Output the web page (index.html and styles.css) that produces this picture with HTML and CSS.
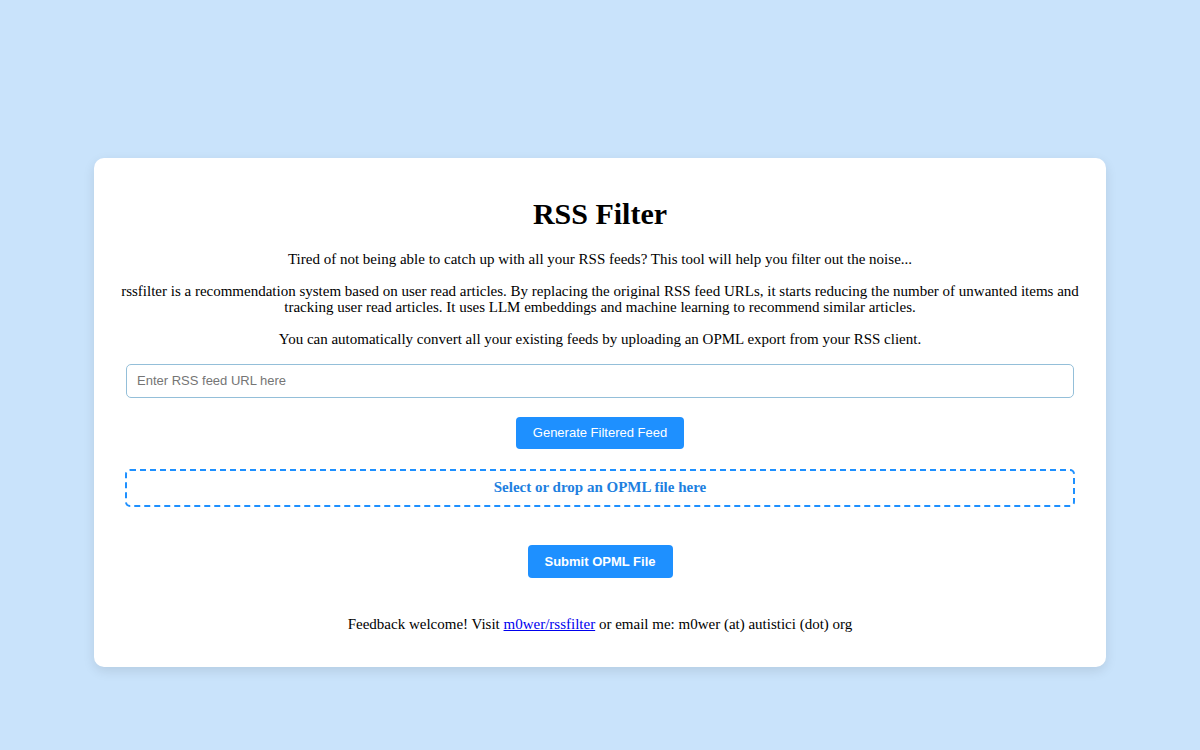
FILE: index.html
```html
<!DOCTYPE html>
<html lang="en">
<head>
<meta charset="utf-8">
<title>RSS Filter</title>
<link rel="stylesheet" href="styles.css">
</head>
<body>
<main class="card">
  <h1 class="title">RSS Filter</h1>
  <p class="text">Tired of not being able to catch up with all your RSS feeds? This tool will help you filter out the noise...</p>
  <p class="text">rssfilter is a recommendation system based on user read articles. By replacing the original RSS feed URLs, it starts reducing the number of unwanted items and tracking user read articles. It uses LLM embeddings and machine learning to recommend similar articles.</p>
  <p class="text text-last">You can automatically convert all your existing feeds by uploading an OPML export from your RSS client.</p>
  <input class="url-input" type="text" placeholder="Enter RSS feed URL here">
  <div class="btn-row"><button class="btn">Generate Filtered Feed</button></div>
  <label class="drop">Select or drop an OPML file here</label>
  <div class="btn-row submit-row"><button class="btn btn-bold">Submit OPML File</button></div>
  <p class="text footer">Feedback welcome! Visit <a href="#">m0wer/rssfilter</a> or email me: m0wer (at) autistici (dot) org</p>
</main>
</body>
</html>
```
FILE: styles.css
```css
html, body {
  margin: 0;
  padding: 0;
}
body {
  background: #c9e3fb;
  font-family: "Liberation Serif", "Times New Roman", serif;
  font-size: 15px;
  color: #000;
  padding-top: 158px;
  min-height: 750px;
  box-sizing: border-box;
}
.card {
  width: 1012px;
  margin: 0 auto;
  box-sizing: border-box;
  background: #fff;
  border-radius: 10px;
  box-shadow: 0 4px 12px rgba(0, 0, 0, 0.1);
  padding: 28px 27px 35px;
  display: flex;
  flex-direction: column;
  align-items: stretch;
  text-align: center;
}
.title {
  font-size: 30px;
  font-weight: bold;
  margin: 11px 0 19px;
  line-height: 1.15;
}
.text {
  margin: 0 0 16px;
  line-height: 16px;
}
.text-last {
  margin-bottom: 17px;
}
.url-input {
  margin: 0 5px;
  height: 34px;
  box-sizing: border-box;
  border: 1px solid #94bfd9;
  border-radius: 5px;
  padding: 0 10px;
  font-family: "Liberation Sans", Arial, sans-serif;
  font-size: 13px;
  outline: none;
}
.url-input::placeholder {
  color: #757575;
}
.btn-row {
  display: flex;
  justify-content: center;
  margin: 19px 0 20px;
}
.btn {
  background: #1e90ff;
  color: #fff;
  border: none;
  border-radius: 4px;
  font-family: "Liberation Sans", Arial, sans-serif;
  font-size: 13px;
  padding: 0 17px;
  height: 32px;
}
.btn-bold {
  font-weight: bold;
  height: 33px;
}
.drop {
  margin: 0 4px;
  height: 38px;
  box-sizing: border-box;
  border: 2px dashed #1e90ff;
  border-radius: 5px;
  display: flex;
  align-items: center;
  justify-content: center;
  color: #1e7fe0;
  font-weight: bold;
  font-size: 15px;
}
.submit-row {
  margin: 38px 0 38px;
}
.footer {
  margin: 0;
}
.footer a {
  color: #0000ee;
}
```
